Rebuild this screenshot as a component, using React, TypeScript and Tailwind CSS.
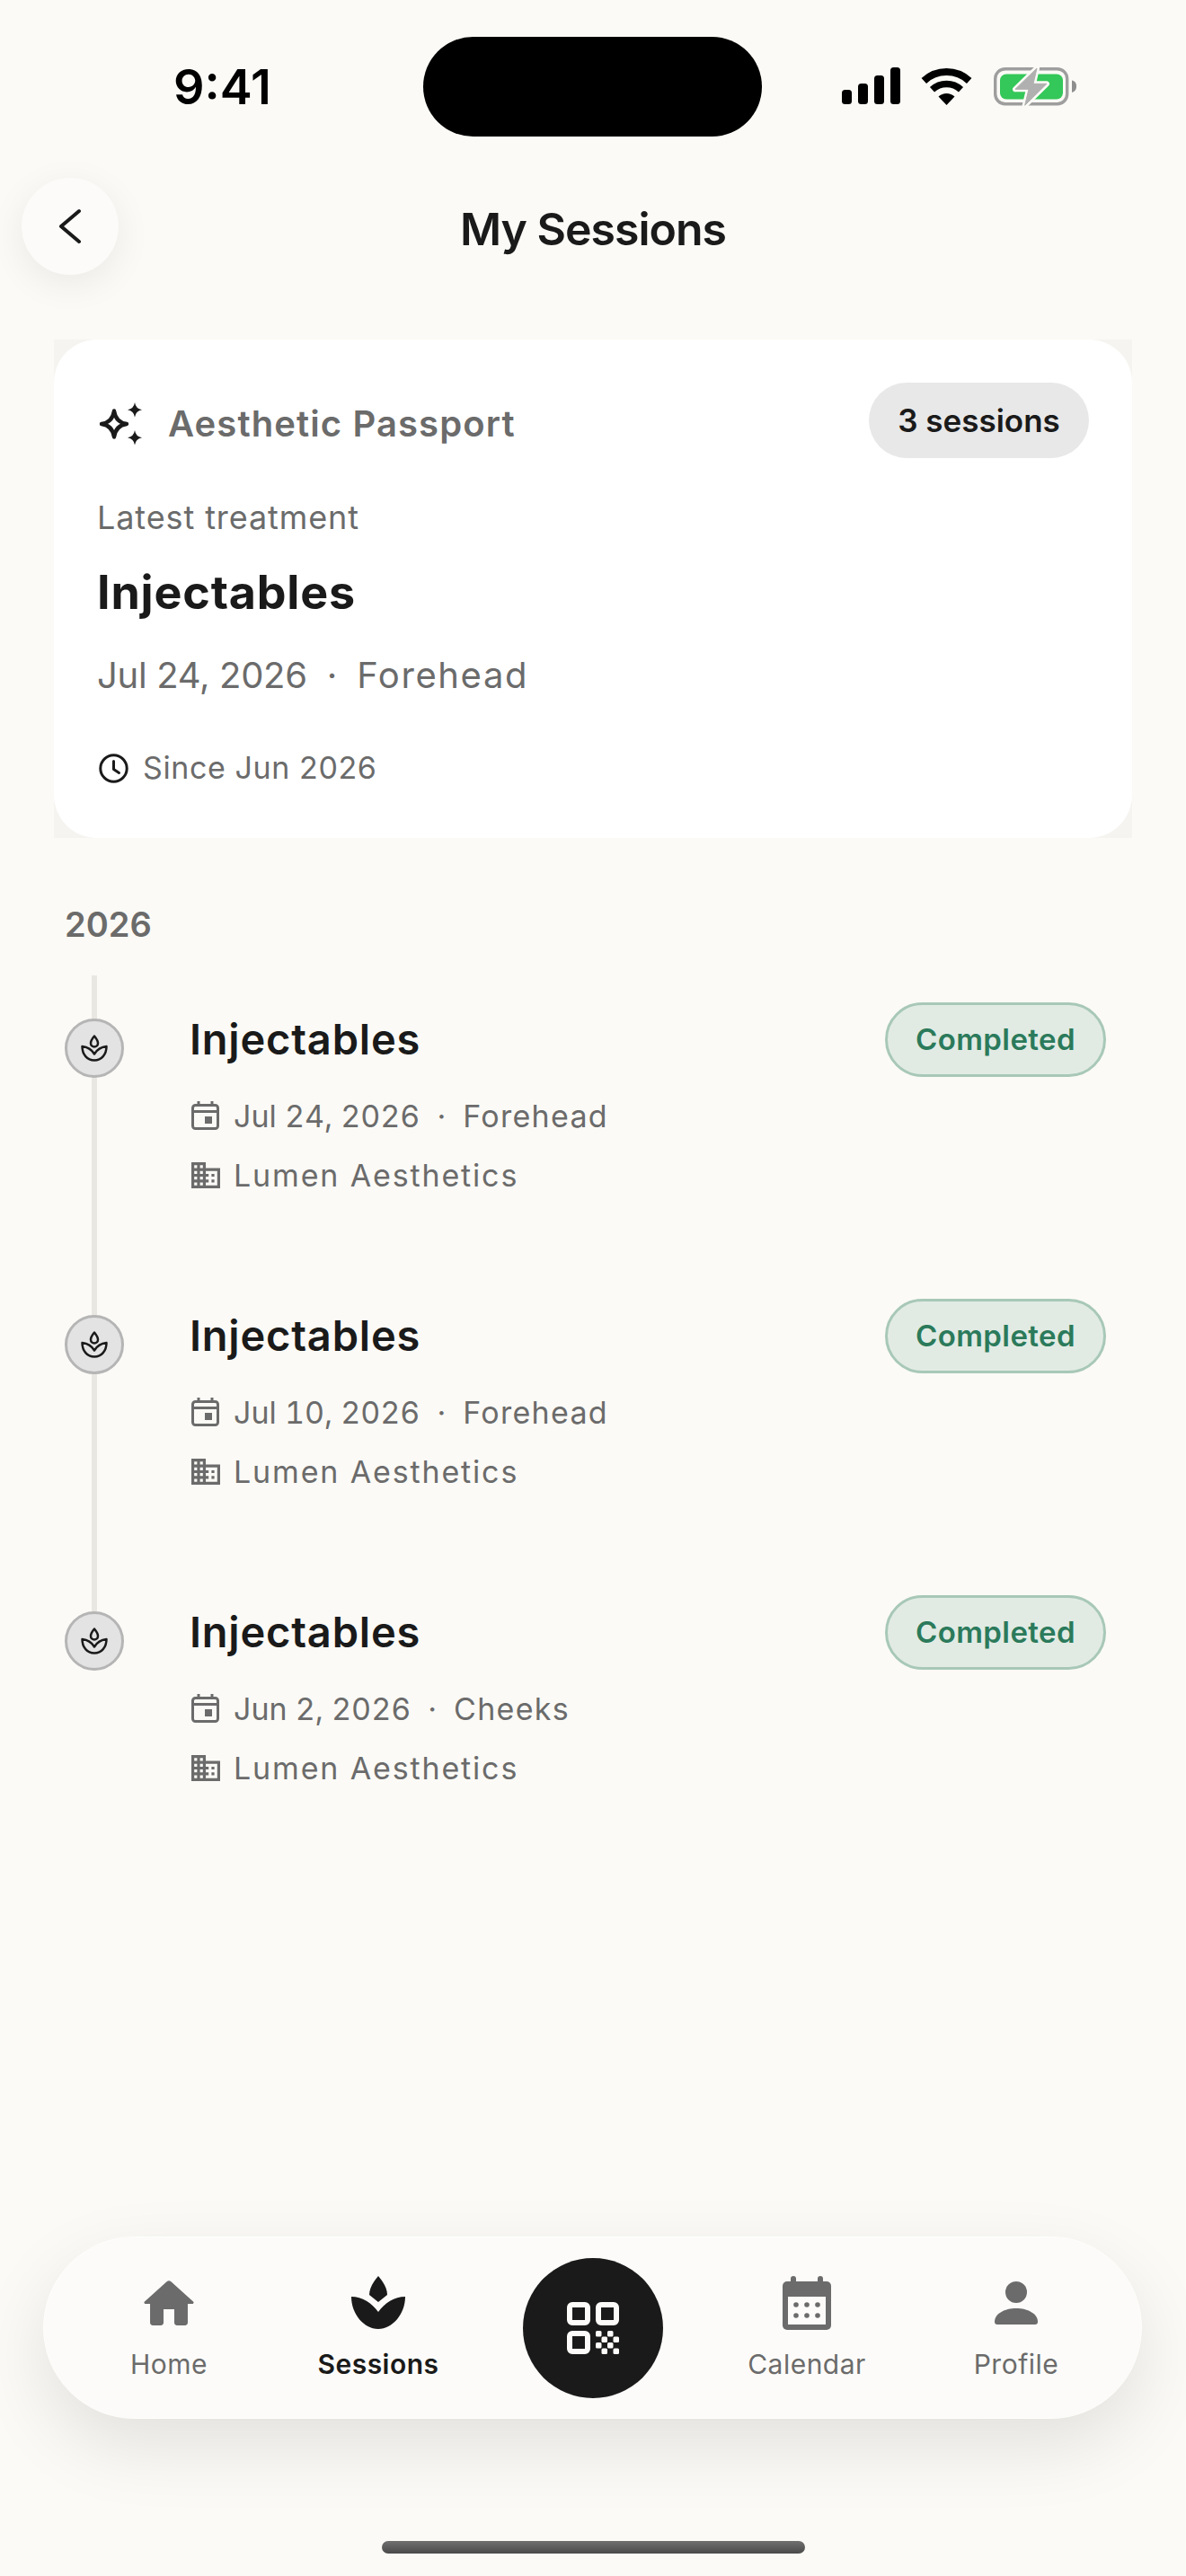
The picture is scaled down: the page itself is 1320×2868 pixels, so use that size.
const dark = "#1a1a1a";
const grey = "#6b6b6b";

function Signal() {
  return (
    <svg width="65" height="41" viewBox="0 0 65 41" fill="#000">
      <rect x="0" y="25" width="11" height="16" rx="3.5" />
      <rect x="18" y="18" width="11" height="23" rx="3.5" />
      <rect x="36" y="9" width="11" height="32" rx="3.5" />
      <rect x="54" y="0" width="11" height="41" rx="3.5" />
    </svg>
  );
}

function Wifi() {
  return (
    <svg width="57" height="42" viewBox="0 0 57 42" fill="none" stroke="#000">
      <path d="M3.3 15A37 37 0 0 1 53.7 15" strokeWidth="8" />
      <path d="M12.5 24.8A23.5 23.5 0 0 1 44.5 24.8" strokeWidth="7.5" />
      <path d="M28.5 42L19.5 32.5A13 13 0 0 1 37.5 32.5Z" fill="#000" stroke="none" />
    </svg>
  );
}

function Battery() {
  const bolt = "M48 1L24 24.3H39L34.7 42.3L59 18.3H44Z";
  return (
    <svg width="93" height="44" viewBox="0 0 93 44" fill="none">
      <rect x="1.7" y="1.7" width="80" height="39" rx="11" stroke="#9e9e9e" strokeWidth="3.4" />
      <rect x="7" y="7.5" width="70" height="28" rx="7" fill="#34c759" />
      <path d="M87 14.5C90 15 92 17 92 21C92 25 90 27 87 28Z" fill="#8e8e8e" />
      <path d={bolt} stroke="#fbfaf6" strokeWidth="6" strokeLinejoin="round" />
      <path d={bolt} fill="#b0b0b0" stroke="#b0b0b0" strokeWidth="1" strokeLinejoin="round" />
    </svg>
  );
}

function Sparkles() {
  return (
    <svg width="48" height="48" viewBox="0 0 48 48" fill={dark}>
      <path
        d="M17 9.5Q18.8 22.2 31 24Q18.8 25.8 17 38.5Q15.2 25.8 3 24Q15.2 22.2 17 9.5Z"
        fill="none"
        stroke={dark}
        strokeWidth="4.4"
        strokeLinejoin="round"
      />
      <path d="M40 0Q41 7 48 8.2Q41 9.4 40 16.5Q39 9.4 32 8.2Q39 7 40 0Z" />
      <path d="M40 31Q41 38 48 39.3Q41 40.6 40 47.5Q39 40.6 32 39.3Q39 38 40 31Z" />
    </svg>
  );
}

function Clock() {
  return (
    <svg width="33" height="33" viewBox="0 0 33 33" fill="none" stroke={dark} strokeWidth="3">
      <circle cx="16.5" cy="16.5" r="14.7" />
      <path d="M16.5 8.5V17.5L22.5 21.5" strokeLinecap="round" strokeLinejoin="round" />
    </svg>
  );
}

function LotusOutline() {
  return (
    <svg width="32" height="32" viewBox="-2 -2 64 64" fill="none" stroke={dark} strokeWidth="5" strokeLinejoin="round">
      <path d="M30 3C35 9 38 14 38 19C38 24 34 27 30 27C26 27 22 24 22 19C22 14 25 9 30 3Z" />
      <path d="M3 26C13 27 24 33 30 43C36 33 47 27 57 26C57 44 46 57 30 57C14 57 3 44 3 26Z" />
    </svg>
  );
}

function LotusFilled() {
  return (
    <svg width="60" height="60" viewBox="0 0 60 60" fill={dark}>
      <path d="M30 0C36 7 40 14 40 21L30 29L20 21C20 14 24 7 30 0Z" />
      <path d="M0 23C12 23 23 30 30 40C37 30 48 23 60 23C60 42 46 59 30 59C14 59 0 42 0 23Z" />
    </svg>
  );
}

function CalendarSmall() {
  return (
    <svg width="32" height="32" viewBox="0 0 32 32" fill="none" stroke={grey} strokeWidth="3">
      <rect x="1.5" y="4.5" width="28" height="26" rx="3" />
      <path d="M1.5 11.5H29.5M8 0V5M23 0V5" />
      <rect x="15" y="17" width="8" height="8" fill={grey} stroke="none" />
    </svg>
  );
}

function Building() {
  return (
    <svg width="32" height="29" viewBox="2 3 20 18" fill={grey}>
      <path d="M12 7V3H2v18h20V7H12zM6 19H4v-2h2v2zm0-4H4v-2h2v2zm0-4H4V9h2v2zm0-4H4V5h2v2zm4 12H8v-2h2v2zm0-4H8v-2h2v2zm0-4H8V9h2v2zm0-4H8V5h2v2zm10 12h-8v-2h2v-2h-2v-2h2v-2h-2V9h8v10zm-2-8h-2v2h2v-2zm0 4h-2v2h2v-2z" />
    </svg>
  );
}

function HomeIcon() {
  return (
    <svg width="56" height="50" viewBox="2.8 3.3 18.4 16.7" fill={grey}>
      <path d="M10 19v-5h4v5c0 .55.45 1 1 1h3c.55 0 1-.45 1-1v-7h1.7c.46 0 .68-.57.33-.87L12.67 3.6c-.38-.34-.96-.34-1.34 0l-8.36 7.53c-.34.3-.13.87.33.87H5v7c0 .55.45 1 1 1h3c.55 0 1-.45 1-1z" />
    </svg>
  );
}

function CalendarNav() {
  return (
    <svg width="54" height="60" viewBox="0 0 54 60" fill={grey}>
      <rect x="9" y="0" width="6" height="10" rx="3" />
      <rect x="39" y="0" width="6" height="10" rx="3" />
      <rect x="0" y="6" width="54" height="54" rx="5" />
      <rect x="6" y="23" width="42" height="31" fill="#fcfbf9" />
      <circle cx="15" cy="32" r="2.8" />
      <circle cx="27" cy="32" r="2.8" />
      <circle cx="39" cy="32" r="2.8" />
      <circle cx="15" cy="44" r="2.8" />
      <circle cx="27" cy="44" r="2.8" />
      <circle cx="39" cy="44" r="2.8" />
    </svg>
  );
}

function ProfileIcon() {
  return (
    <svg width="48" height="48" viewBox="0 0 48 48" fill={grey}>
      <ellipse cx="24" cy="12" rx="12" ry="12" />
      <path d="M0 45C0 36 11 30 24 30C37 30 48 36 48 45C48 47 47 48 45 48H3C1 48 0 47 0 45Z" />
    </svg>
  );
}

function QrIcon() {
  const cells = [
    [0, 0], [13, 0],
    [6.5, 6.5], [19.5, 6.5],
    [0, 13], [13, 13],
    [6.5, 19.5], [19.5, 19.5],
  ];
  return (
    <svg width="58" height="58" viewBox="0 0 58 58" fill="none" stroke="#fcfbf9" strokeWidth="6">
      <rect x="3" y="3" width="20" height="20" rx="3" />
      <rect x="35" y="3" width="20" height="20" rx="3" />
      <rect x="3" y="35" width="20" height="20" rx="3" />
      {cells.map(([x, y]) => (
        <rect key={`${x}-${y}`} x={32 + x} y={32 + y} width="6.5" height="6.5" rx="1.5" fill="#fcfbf9" stroke="none" />
      ))}
    </svg>
  );
}

function Session({ date, area }: { date: string; area: string }) {
  return (
    <div className="relative h-[330px] pl-[141px] pr-[29px]">
      <div className="absolute left-0 top-[48px] flex h-[66px] w-[66px] items-center justify-center rounded-full border-[3.5px] border-[#b5b5b5] bg-[#e3e3e3]">
        <LotusOutline />
      </div>
      <div className="flex items-start justify-between pt-[30px]">
        <h3 className="-ml-[2px] mt-[14px] text-[47px] leading-[54px] font-semibold tracking-[0.8px] text-[#1a1a1a]">Injectables</h3>
        <span className="flex h-[83px] w-[246px] items-center justify-center rounded-full border-[3px] border-[#a8c8b7] bg-[#e1ebe4] pt-[1px] text-[33px] font-semibold tracking-[0.4px] text-[#2b7a5b]">
          Completed
        </span>
      </div>
      <div className="mt-[23px] flex h-[40px] items-center text-[34px] text-[#6b6b6b]">
        <CalendarSmall />
        <span className="ml-[15px] tabular-nums">{date}</span>
        <span className="mx-[19px]">·</span>
        <span className="tracking-[1.3px]">{area}</span>
      </div>
      <div className="mt-[26px] flex h-[40px] items-center text-[34px] text-[#6b6b6b]">
        <Building />
        <span className="ml-[15px] tracking-[1.85px]">Lumen Aesthetics</span>
      </div>
    </div>
  );
}

function NavItem({ icon, label, active }: { icon: React.ReactNode; label: string; active?: boolean }) {
  return (
    <div className="flex w-[233px] flex-col items-center">
      <div className="flex h-[60px] items-center">{icon}</div>
      <span className={`mt-[20px] text-[30px] leading-[36px] tracking-[0.5px] ${active ? "font-semibold text-[#1a1a1a]" : "text-[#6b6b6b]"}`}>
        {label}
      </span>
    </div>
  );
}

export default function App() {
  return (
    <main className="flex h-[2868px] w-[1320px] flex-col overflow-hidden bg-[#fbfaf6] font-['Inter',sans-serif]">
      {/* status bar */}
      <div className="flex h-[198px] items-start">
        <div className="flex h-[152px] w-[471px] items-end justify-center pb-[23px] pl-[24px] text-[54px] leading-[64px] font-semibold text-black">
          9:41
        </div>
        <div className="mt-[41px] h-[111px] w-[377px] rounded-full bg-black" />
        <div className="ml-[89px] mt-[75px] flex items-start">
          <Signal />
          <div className="ml-[23px]"><Wifi /></div>
          <div className="ml-[24px]"><Battery /></div>
        </div>
      </div>

      {/* header */}
      <header className="grid h-[108px] grid-cols-[108px_1fr_108px] items-center px-[24px]">
        <button type="button" className="flex h-[108px] w-[108px] items-center justify-center rounded-full bg-[#fcfbf9] shadow-[0_10px_40px_rgba(0,0,0,0.07)]">
          <svg width="26" height="40" viewBox="0 0 26 40" fill="none" stroke="#1a1a1a" strokeWidth="4" strokeLinecap="round" strokeLinejoin="round">
            <path d="M23 3L3 20L23 37" />
          </svg>
        </button>
        <h1 className="pt-[5px] text-center text-[50px] leading-[60px] font-semibold tracking-[-1px] text-[#1a1a1a]">My Sessions</h1>
        <div />
      </header>

      {/* passport card */}
      <section className="mx-[60px] mt-[72px] bg-[#f5f4f0]">
        <div className="h-[555px] rounded-[48px] bg-white pl-[48px] pr-[48px] pt-[48px]">
          <div className="flex items-start justify-between">
            <div className="ml-[2px] mt-[22px] flex items-center">
              <Sparkles />
              <span className="ml-[29px] text-[40px] leading-[48px] font-semibold tracking-[1.1px] text-[#6b6b6b]">Aesthetic Passport</span>
            </div>
            <span className="flex h-[84px] w-[245px] items-center justify-center rounded-full bg-[#e8e8e8] text-[35px] font-semibold text-[#1a1a1a]">
              3 sessions
            </span>
          </div>
          <p className="mt-[45px] text-[36px] leading-[42px] tracking-[0.9px] text-[#6b6b6b]">Latest treatment</p>
          <h2 className="mt-[33px] text-[52px] leading-[60px] font-bold tracking-[0.8px] text-[#1a1a1a]">Injectables</h2>
          <div className="mt-[38px] flex text-[40px] leading-[48px] text-[#6b6b6b]">
            <span className="tracking-[-0.3px]">Jul 24, 2026</span>
            <span className="mx-[22px]">·</span>
            <span className="tracking-[1.6px]">Forehead</span>
          </div>
          <div className="ml-[2px] mt-[58px] flex items-center">
            <Clock />
            <span className="ml-[16px] text-[34px] leading-[42px] tracking-[0.6px] text-[#6b6b6b]">Since Jun 2026</span>
          </div>
        </div>
      </section>

      {/* timeline */}
      <section className="mt-[72px] pl-[72px]">
        <h2 className="text-[38px] leading-[48px] font-semibold text-[#6b6b6b]">2026</h2>
        <div className="relative mt-[33px] w-[1188px]">
          <div className="absolute left-[30px] top-0 h-[710px] w-[6px] bg-[#e9e7e1]" />
          <Session date="Jul 24, 2026" area="Forehead" />
          <Session date="Jul 10, 2026" area="Forehead" />
          <Session date="Jun 2, 2026" area="Cheeks" />
        </div>
      </section>

      {/* bottom nav */}
      <nav className="mx-[48px] mt-auto flex h-[203px] w-[1223px] items-center justify-center rounded-full border border-[#fefefc] bg-[#fcfbf9] shadow-[0_30px_80px_rgba(0,0,0,0.1)]">
        <NavItem icon={<HomeIcon />} label="Home" />
        <NavItem icon={<LotusFilled />} label="Sessions" active />
        <div className="mx-[44px] flex h-[156px] w-[156px] shrink-0 items-center justify-center rounded-full bg-[#1a1a1a]">
          <QrIcon />
        </div>
        <NavItem icon={<CalendarNav />} label="Calendar" />
        <NavItem icon={<ProfileIcon />} label="Profile" />
      </nav>

      <div className="mx-auto mb-[25px] mt-[136px] h-[14px] w-[471px] rounded-full bg-gradient-to-b from-[#707070] to-[#4a4a4a]" />
    </main>
  );
}
